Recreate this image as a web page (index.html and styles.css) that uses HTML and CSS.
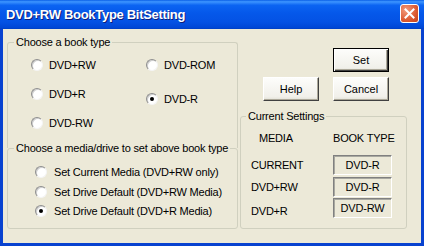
FILE: index.html
```html
<!DOCTYPE html>
<html lang="en">
  <head>
    <meta charset="UTF-8" />
    <meta name="viewport" content="width=device-width, initial-scale=1.0" />
    <title>DVD+RW BookType BitSetting</title>
    <link rel="stylesheet" href="styles.css">
  </head>
  <body>
    <div class="window">
      <div class="titlebar">
        <span class="title">DVD+RW BookType BitSetting</span>
        <span class="close">
          <svg width="11" height="11" viewBox="0 0 11 11">
            <path d="M1.5 1.5 L9.5 9.5 M9.5 1.5 L1.5 9.5" stroke="#fff" stroke-width="2" stroke-linecap="square" />
          </svg>
        </span>
      </div>

      <div class="client">
        <div class="left">
          <!-- book type -->
          <fieldset class="group group-type">
            <legend>Choose a book type</legend>
            <div class="type-cols">
              <div class="col col-a">
                <label class="opt"><span class="radio"></span>DVD+RW</label>
                <label class="opt"><span class="radio"></span>DVD+R</label>
                <label class="opt"><span class="radio"></span>DVD-RW</label>
              </div>
              <div class="col col-b">
                <label class="opt"><span class="radio"></span>DVD-ROM</label>
                <label class="opt"><span class="radio on"></span>DVD-R</label>
              </div>
            </div>
          </fieldset>

          <!-- target -->
          <fieldset class="group group-target">
            <legend>Choose a media/drive to set above book type</legend>
            <div class="col targets">
              <label class="opt"><span class="radio"></span>Set Current Media (DVD+RW only)</label>
              <label class="opt"><span class="radio"></span>Set Drive Default (DVD+RW Media)</label>
              <label class="opt"><span class="radio on"></span>Set Drive Default (DVD+R Media)</label>
            </div>
          </fieldset>
        </div>

        <div class="right">
          <div class="buttons">
            <button class="btn btn-default set">Set</button>
            <button class="btn help">Help</button>
            <button class="btn cancel">Cancel</button>
          </div>

          <fieldset class="group group-current">
            <legend>Current Settings</legend>
            <div class="settings">
              <span class="head head-media">MEDIA</span>
              <span class="head head-type">BOOK TYPE</span>

              <span class="name">CURRENT</span>
              <span class="value">DVD-R</span>

              <span class="name">DVD+RW</span>
              <span class="value">DVD-R</span>

              <span class="name low">DVD+R</span>
              <span class="value">DVD-RW</span>
            </div>
          </fieldset>
        </div>
      </div>
    </div>
  </body>
</html>
```

FILE: styles.css
```css
* {
  box-sizing: border-box;
}

body {
  margin: 0;
  font-family: "Liberation Sans", Arial, sans-serif;
  font-size: 11px;
  letter-spacing: -0.2px;
  color: #000;
}

.window {
  width: 424px;
  height: 246px;
  display: flex;
  flex-direction: column;
  padding: 0 3px 3px;
  background: #0842d0;
}

.titlebar {
  height: 29px;
  margin: 0 -3px;
  display: flex;
  align-items: center;
  justify-content: space-between;
  padding: 0 5px 0 6px;
  background: linear-gradient(to bottom, #0a5fe6 0%, #3d95ff 6%, #0b64f2 18%, #0558ea 45%, #0452e4 75%, #0047d6 95%, #003fc2 100%);
  color: #fff;
}

.title {
  font-weight: bold;
  font-size: 13px;
  letter-spacing: -0.3px;
  text-shadow: 1px 1px #0f1f7a;
}

.close {
  width: 19px;
  height: 19px;
  align-self: flex-start;
  margin-top: 4px;
  display: flex;
  align-items: center;
  justify-content: center;
  border: 1px solid #fff;
  border-radius: 3px;
  background: radial-gradient(circle at 30% 30%, #f29a7c, #dc5a32 60%, #c2401c);
}

.client {
  flex: 1;
  display: flex;
  gap: 2px;
  padding: 6px 0 0 4px;
  background: #ece9d8;
}

/* group boxes */
.group {
  margin: 0;
  min-width: 0;
  border: 1px solid #d0d0bf;
  border-radius: 3px;
  padding: 0 0 0 6px;
}

.group legend {
  padding: 0 2px;
  line-height: 14px;
  white-space: nowrap;
}

.left {
  width: 231px;
  display: flex;
  flex-direction: column;
}

.group-type {
  height: 113px;
  border-bottom: none;
  border-radius: 3px 3px 0 0;
  padding-top: 9px;
}

.group-target {
  margin-top: -7px;
  height: 88px;
  padding-top: 10px;
}

.type-cols {
  display: flex;
}

.col {
  display: flex;
  flex-direction: column;
}

.col-a {
  width: 115px;
  margin-left: 17px;
  gap: 15px;
}

.col-b {
  gap: 20px;
}

.targets {
  margin-left: 21px;
  gap: 5.5px;
}

.opt {
  display: flex;
  align-items: center;
  gap: 6px;
  height: 14px;
  line-height: 14px;
  white-space: nowrap;
}

.targets .opt {
  gap: 7px;
}

.radio {
  width: 12px;
  height: 12px;
  flex: none;
  display: flex;
  align-items: center;
  justify-content: center;
  border-radius: 50%;
  border: 1px solid;
  border-color: #8e8e8e #f4f4f4 #f4f4f4 #8e8e8e;
  background: #fff;
  box-shadow: inset 1px 1px 0 #cfcfcf;
}

.radio.on::after {
  content: "";
  width: 4px;
  height: 4px;
  border-radius: 50%;
  background: #000;
}

/* right side */
.right {
  width: 167px;
  display: flex;
  flex-direction: column;
}

.buttons {
  display: grid;
  grid-template-columns: 56px 56px;
  grid-template-rows: 24px 24px;
  column-gap: 14px;
  row-gap: 5px;
  justify-content: end;
  padding-right: 18px;
  margin-top: 13px;
}

.btn {
  font: inherit;
  padding: 0;
  color: #000;
  background: linear-gradient(to bottom, #fdfdfb, #f1f0ea 85%, #e2e0d6);
  border: 1px solid;
  border-color: #fff #404040 #404040 #fff;
  box-shadow: inset -1px -1px 0 #aca899;
}

.btn-default {
  border-color: #000;
  box-shadow: inset 1px 1px 0 #fff, inset -1px -1px 0 #404040, inset -2px -2px 0 #aca899;
}

.set {
  grid-column: 2;
  grid-row: 1;
}

.help {
  grid-column: 1;
  grid-row: 2;
}

.cancel {
  grid-column: 2;
  grid-row: 2;
}

.group-current {
  margin-top: 8px;
  height: 120px;
  padding-left: 5px;
  padding-top: 8px;
}

.settings {
  display: grid;
  grid-template-columns: 82px 59px;
  grid-template-rows: 22.5px 20px 20px 20px;
  row-gap: 1.5px;
  margin-left: 5px;
}

.head {
  line-height: 14px;
  align-self: start;
}

.head-media {
  padding-left: 8px;
}

.head-type {
  text-align: center;
  white-space: nowrap;
}

.name {
  align-self: center;
  line-height: 14px;
}

.name.low {
  align-self: end;
}

.value {
  display: flex;
  align-items: center;
  justify-content: center;
  border: 1px solid;
  border-color: #808080 #fff #fff #808080;
  box-shadow: inset 1px 1px 0 #a8a8a0;
}
```
